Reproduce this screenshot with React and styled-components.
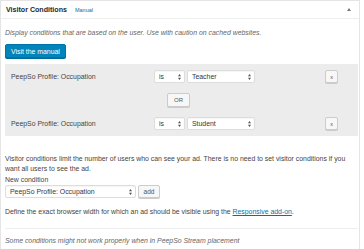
import React from "react"
import styled, { createGlobalStyle } from "styled-components"

const GlobalStyle = createGlobalStyle`
  html, body {
    margin: 0;
    padding: 0;
    background: #fff;
  }
  body {
    font-family: "Liberation Sans", Arial, sans-serif;
    color: #444;
    font-size: 6.9px;
  }
`;

const Box = styled.div`
  width: 358px;
  border: 1px solid #e5e5e5;
  border-bottom: none;
  background: #fff;
  height: 260px;
`;

const Header = styled.div`
  height: 17px;
  display: flex;
  align-items: center;
  padding: 0 5px;
  border-bottom: 1px solid #eee;
`;

const Title = styled.h2`
  margin: 0;
  font-size: 7.1px;
  font-weight: 700;
  color: #23282d;
`;

const ManualLink = styled.a`
  margin-left: 8px;
  font-size: 5.5px;
  color: #0073aa;
  text-decoration: none;
`;

const Toggle = styled.span`
  margin-left: auto;
  margin-right: 3px;
  width: 0;
  height: 0;
  border-left: 2px solid transparent;
  border-right: 2px solid transparent;
  border-bottom: 3px solid #72777c;
`;

const Content = styled.div`
  padding: 9px 1px 0 4px;
`;

const Text = styled.p`
  margin: ${p => p.$mt || 0}px 0 0;
  line-height: 10px;
  font-style: ${p => (p.$italic ? "italic" : "normal")};
  color: ${p => (p.$italic ? "#666" : "#444")};
`;

const PrimaryButton = styled.button`
  display: block;
  margin-top: 6px;
  height: 14px;
  padding: 0 5px;
  font-family: inherit;
  font-size: 6.9px;
  color: #fff;
  background: #0085ba;
  border: 1px solid #0073aa;
  border-radius: 2px;
  box-shadow: 0 1px 0 #006799;
`;

const Panel = styled.div`
  margin-top: 6px;
  background: #ececec;
  padding: 6px 0;
  display: flex;
  flex-direction: column;
  gap: 10px;
`;

const Row = styled.div`
  display: flex;
  align-items: center;
  height: 13px;
  padding-left: 6px;
`;

const Label = styled.span`
  width: 143px;
`;

const SelectBox = styled.span`
  box-sizing: border-box;
  width: ${p => p.$w}px;
  height: ${p => p.$h || 13}px;
  margin-right: 2px;
  display: flex;
  align-items: center;
  justify-content: space-between;
  padding: 0 3px 0 4px;
  background: #fff;
  border: 1px solid #ddd;
  border-radius: 2px;
  color: #32373c;
  box-shadow: inset 0 1px 1px rgba(0, 0, 0, 0.04);
`;

const Button = styled.button`
  box-sizing: border-box;
  height: ${p => p.$h || 13}px;
  min-width: ${p => p.$w || 13}px;
  padding: 0 3px;
  font-family: inherit;
  font-size: ${p => p.$fs || 6}px;
  color: #555;
  background: #f7f7f7;
  border: 1px solid #ccc;
  border-radius: 2px;
  box-shadow: 0 1px 0 #ccc;
`;

const RemoveButton = styled(Button)`
  margin-left: auto;
  margin-right: 20px;
  font-size: 5.5px;
`;

const OrRow = styled.div`
  display: flex;
  justify-content: center;
  padding-right: 6px;
`;

const NewRow = styled.div`
  display: flex;
  align-items: center;
`;

const Link = styled.a`
  color: #0073aa;
  text-decoration: underline;
`;

const Rule = styled.hr`
  margin: 11px 0 0;
  border: 0;
  border-top: 1px solid #eee;
`;

const Arrows = () => (
  <svg width="3" height="6" viewBox="0 0 3 6">
    <path d="M1.5 0 L3 2.3 L0 2.3 Z M1.5 6 L3 3.7 L0 3.7 Z" fill="#555" />
  </svg>
)

const Select = ({ w, h, children }) => (
  <SelectBox $w={w} $h={h}>
    <span>{children}</span>
    <Arrows />
  </SelectBox>
)

const ConditionRow = ({ value }) => (
  <Row>
    <Label>PeepSo Profile: Occupation</Label>
    <Select w={31}>is</Select>
    <Select w={68}>{value}</Select>
    <RemoveButton>x</RemoveButton>
  </Row>
)

const App = () => (
  <>
    <GlobalStyle />
    <Box>
      <Header>
        <Title>Visitor Conditions</Title>
        <ManualLink href="#">Manual</ManualLink>
        <Toggle />
      </Header>
      <Content>
        <Text $italic>Display conditions that are based on the user. Use with caution on cached websites.</Text>
        <PrimaryButton>Visit the manual</PrimaryButton>
        <Panel>
          <ConditionRow value="Teacher" />
          <OrRow>
            <Button $h={14} $w={23}>OR</Button>
          </OrRow>
          <ConditionRow value="Student" />
        </Panel>
        <Text $mt={18}>
          Visitor conditions limit the number of users who can see your ad. There is no need to set visitor conditions if you want all users to see the ad.
        </Text>
        <Text $mt={1}>New condition</Text>
        <NewRow>
          <Select w={131} h={13}>PeepSo Profile: Occupation</Select>
          <Button $w={22} $fs={6.5}>add</Button>
        </NewRow>
        <Text $mt={9}>
          Define the exact browser width for which an ad should be visible using the <Link href="#">Responsive add-on</Link>.
        </Text>
        <Rule />
        <Text $italic $mt={7}>Some conditions might not work properly when in PeepSo Stream placement</Text>
      </Content>
    </Box>
  </>
)

export default App;
